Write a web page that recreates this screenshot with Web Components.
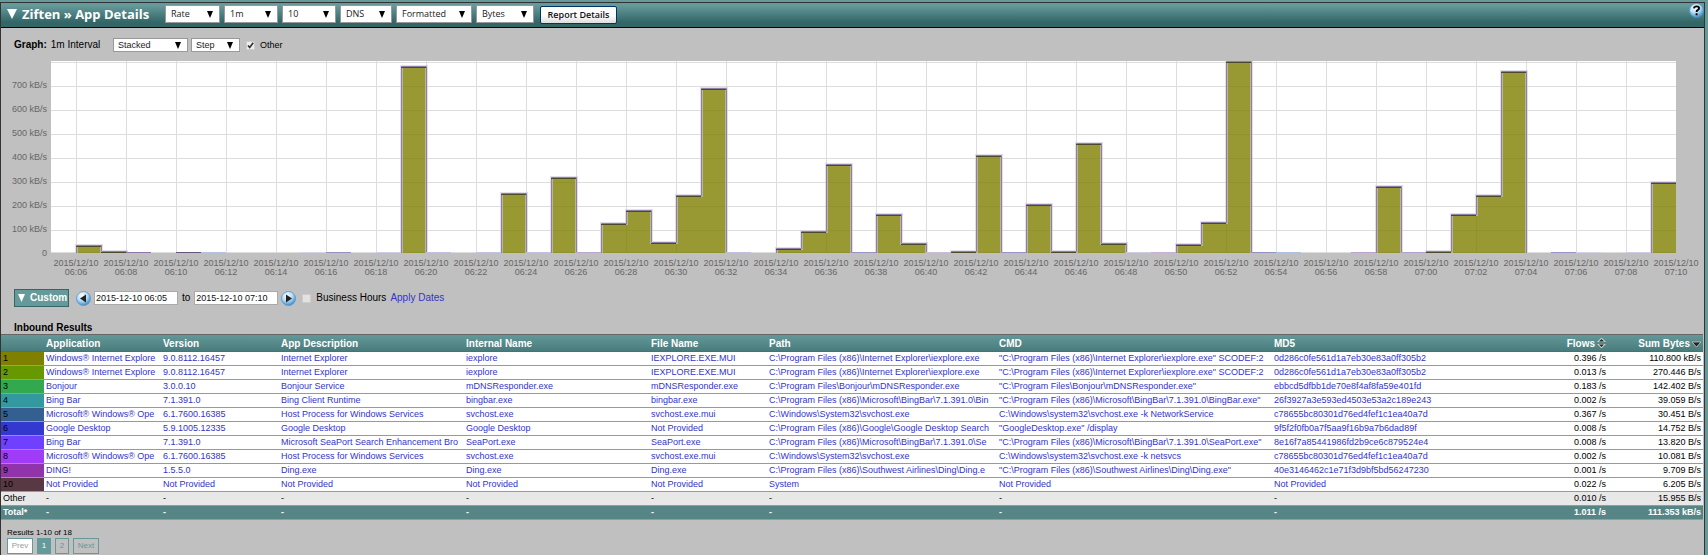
<!DOCTYPE html>
<html lang="en">
<head>
<meta charset="utf-8">
<title>Ziften » App Details</title>
<style>
html { min-height: 100%; background: #699; }
body { margin: 0; padding: 2px 3px 0 0; font: 10px/12px "Liberation Sans", Arial, sans-serif; color: #000; }
</style>
</head>
<body>
<report-page></report-page>
<script>
const define = (name, html, setup) => {
  const template = document.createElement('template');
  template.innerHTML = html;
  customElements.define(name, class extends HTMLElement {
    connectedCallback() {
      if (this.shadowRoot) return;
      this.attachShadow({ mode: 'open' }).append(template.content.cloneNode(true));
      if (setup) setup(this, this.shadowRoot);
    }
  });
};

define('drop-down', `
<style>
:host { display: block; flex: none; }
select {
  display: block; box-sizing: border-box; width: 100%; height: var(--height, 18px); margin: 0; padding: 0 0 0 var(--indent, 5px);
  appearance: none; border: 1px solid #999; border-radius: 0; outline: 0; color: #222;
  font: 9px/12px "Open Sans", sans-serif; font-family: var(--face, "Open Sans", sans-serif);
  background: #fff url("data:image/svg+xml,%3Csvg xmlns='http://www.w3.org/2000/svg' width='6' height='7'%3E%3Cpath d='M0 0h6L3 7z'/%3E%3C/svg%3E") no-repeat right 6px center;
}
</style>
<select></select>`, (host, root) => {
  const select = root.querySelector('select');
  select.setAttribute('aria-label', host.getAttribute('label'));
  select.add(new Option(host.getAttribute('value')));
});

define('check-box', `
<style>
:host { display: block; }
label { display: flex; align-items: center; gap: 5px; }
input { box-sizing: border-box; appearance: none; width: 9px; height: 9px; margin: 0; border: 1px solid #ccc; border-radius: 1px; background: #e2e2e2; }
input:checked { background: url("data:image/svg+xml,%3Csvg xmlns='http://www.w3.org/2000/svg' width='7' height='7'%3E%3Cpath d='M1 3.5 2.7 5.5 6.2 .8' fill='none' stroke='%23333' stroke-width='1.7'/%3E%3C/svg%3E") center no-repeat #eee; }
</style>
<label><input type="checkbox"><slot></slot></label>`, (host, root) => {
  root.querySelector('input').checked = host.hasAttribute('checked');
});

define('round-icon', `
<style>
:host { display: block; flex: none; width: 15px; height: 15px; }
button { display: block; width: 15px; height: 15px; padding: 0; border: 0; background: none; }
svg { display: block; }
</style>
<button type="button"><svg width="15" height="15" viewBox="0 0 15 15">
<defs><radialGradient id="g" cx=".4" cy=".3" r=".75"><stop offset="0" stop-color="#fff"/><stop offset=".5" stop-color="#b5dcf4"/><stop offset="1" stop-color="#2b82cc"/></radialGradient></defs>
<circle cx="7.5" cy="7.5" r="7" fill="url(#g)" stroke="#5496cc" stroke-width=".8"/><path id="glyph"/></svg></button>`, (host, root) => {
  const kind = host.getAttribute('kind');
  const glyph = root.querySelector('#glyph');
  const shapes = { back: 'M10 3.5v8L4 7.5z', next: 'M5 3.5v8L11 7.5z', help: 'M5 5.4Q5.2 3.4 7.6 3.4T10.1 5.2Q10.1 6.3 8.6 7.1 7.6 7.6 7.6 9M7.6 10.2v2' };
  glyph.setAttribute('d', shapes[kind]);
  if (kind === 'help') {
    glyph.setAttribute('fill', 'none');
    glyph.setAttribute('stroke', '#000');
    glyph.setAttribute('stroke-width', '1.9');
  } else glyph.setAttribute('fill', '#222');
  root.querySelector('button').setAttribute('aria-label', kind);
});

define('title-bar', `
<style>
:host { display: flex; align-items: center; gap: 4px; height: 22px; padding: 0 0 2px 6px; border-bottom: 1px solid #000;
  background: linear-gradient(#699 10%, #366 80%); }
h1 { display: flex; align-items: center; gap: 5px; margin: 0; width: 154px; color: #fff; font: bold 13px/20px "Open Sans", sans-serif; white-space: nowrap; }
h1 svg { flex: none; }
button { width: 77px; height: 18px; margin: 2px 0 0 2px; padding: 0; border: 1px solid #036; border-radius: 2px; color: #111;
  background: linear-gradient(#fff 50%, #ddd); font: 600 9px/14px "Open Sans", sans-serif; white-space: nowrap; }
round-icon { margin-left: auto; align-self: flex-start; }
</style>
<h1><svg width="10" height="10" viewBox="0 0 10 10"><path d="M0 0h10L5 10z" fill="#fff"/></svg>Ziften » App Details</h1>
<drop-down style="width:55px" label="Type" value="Rate"></drop-down>
<drop-down style="width:54px" label="Interval" value="1m"></drop-down>
<drop-down style="width:54px" label="Rows" value="10"></drop-down>
<drop-down style="width:52px" label="Names" value="DNS"></drop-down>
<drop-down style="width:76px" label="Format" value="Formatted"></drop-down>
<drop-down style="width:58px" label="Unit" value="Bytes"></drop-down>
<button type="button">Report Details</button>
<round-icon kind="help"></round-icon>`);

define('graph-options', `
<style>
:host { display: flex; align-items: center; gap: 3px; height: 14px; padding: 10px 0 9px 13px; --height: 14px; --indent: 4px; --face: "Liberation Sans"; }
p { display: flex; gap: 4px; margin: 0; width: 96px; }
check-box { margin-left: 3px; font-size: 9px; }
</style>
<p><b>Graph:</b><span>1m Interval</span></p>
<drop-down style="width:75px" label="Graph style" value="Stacked"></drop-down>
<drop-down style="width:49px" label="Line style" value="Step"></drop-down>
<check-box checked>Other</check-box>`);

define('rate-chart', `
<style>
:host { display: grid; grid-template-columns: 50px 1fr; padding-right: 28px; color: #666; font-size: 9px; }
.scale { margin-top: 12px; padding-right: 4px; text-align: right; line-height: 24px; height: 180px; white-space: nowrap; }
svg { display: block; width: 100%; height: 192px; background: #fff; }
path { vector-effect: non-scaling-stroke; fill: none; }
.times { grid-column: 2; display: grid; grid-auto-flow: column; grid-auto-columns: 1fr; width: calc(100% * 66 / 65); padding-top: 6px; line-height: 9px; text-align: center; }
.times span { min-width: 0; display: flex; flex-direction: column; align-items: center; white-space: nowrap; }
</style>
<div class="scale"></div>
<svg viewBox="0 0 1625 192" preserveAspectRatio="none" role="img" aria-label="Bytes per second"></svg>
<div class="times"></div>`, (host, root) => {
  const tops = { 1: 184, 2: 190, 14: 5, 18: 132, 20: 116, 22: 162, 23: 149, 24: 181, 25: 134, 26: 27, 29: 187, 30: 170, 31: 103,
    33: 153, 34: 182, 36: 190, 37: 94, 39: 143, 40: 190, 41: 82, 42: 182, 45: 183, 46: 161, 47: 0, 53: 125, 55: 190, 56: 153, 57: 134, 58: 10, 64: 121 };
  const traces = { 3: '#8f76ad', 5: '#66557a', 6: '#b6c1e0', 10: '#d8d0e6', 11: '#9a8fc0', 13: '#cfcbe6', 15: '#c4bfe0', 17: '#c4c4e0', 19: '#c4bfe0', 21: '#bca8cc',
    27: '#c4bfe0', 32: '#9a92c4', 35: '#c8bcd8', 38: '#9a92c4', 43: '#d0cae4', 44: '#c8b0d4', 48: '#9690c0', 49: '#acc0e0', 52: '#b8a4cc', 54: '#b0a0cc', 60: '#9a92c4', 61: '#d8d0e6', 63: '#cfcbe6' };
  const draw = (d, css) => `<path d="${d}" style="${css}"/>`;
  let grid = 'M0 191.5H1625', fill = '', shade = '', outline = '', lines = '';
  for (let y = 1; y < 190; y += 24) grid += `M0 ${y + .5}H1625`;
  for (let x = 25; x < 1625; x += 50) grid += `M${x + .5} 0V192`;
  for (let m = 0; m < 65; m++) {
    const x = m * 25, y = tops[m];
    if (y === undefined) {
      if (tops[m - 1] !== undefined) outline += 'V192';
      if (traces[m]) lines += draw(`M${x} 191.5h25`, `stroke:${traces[m]}`);
    } else {
      fill += `M${x} ${y + 1}h25V192h-25z`;
      shade += `M${x} ${y + 1.5}h25`;
      outline += tops[m - 1] === undefined ? `M${x + .5} 192V${y + .5}H${x + 25.5}` : `V${y + .5}h25`;
    }
  }
  root.querySelector('svg').innerHTML = draw(grid, 'stroke:#ddd') + draw(fill, 'fill:#808000;fill-opacity:.8') +
    draw(outline, 'stroke:#cfc8dc;stroke-width:3;stroke-opacity:.6') + draw(outline, 'stroke:#8d7fa5') + draw(shade, 'stroke:#4c4a2c') + lines;
  root.querySelector('.scale').innerHTML = [700, 600, 500, 400, 300, 200, 100].map(v => `<div>${v} kB/s</div>`).join('') + '<div>0</div>';
  let times = '';
  for (let m = 366; m <= 430; m += 2)
    times += `<span><span>2015/12/10</span><span>0${Math.floor(m / 60)}:${String(m % 60).padStart(2, '0')}</span></span>`;
  root.querySelector('.times').innerHTML = times;
});

define('date-range', `
<style>
:host { display: flex; align-items: center; height: 18px; padding: 12px 0 15px 13px; }
button { display: flex; align-items: center; gap: 5px; box-sizing: border-box; width: 55px; height: 18px; margin-right: 7px; padding: 0 0 0 3px; border: 1px solid #366; background: #699; color: #fff; font: bold 10px/12px "Liberation Sans", sans-serif; }
input { box-sizing: border-box; width: 84px; height: 14px; margin: 0 3px; padding: 0 1px; border: 1px solid #aaa; border-radius: 0; background: #fff; color: #111; font: 9px/12px "Liberation Sans", sans-serif; }
span { margin: 0 1px; }
check-box { margin: 0 4px 0 6px; }
a { color: #33c; text-decoration: none; }
</style>
<button type="button"><svg width="7" height="8" viewBox="0 0 7 8"><path d="M0 0h7L3.5 8z" fill="#fff"/></svg>Custom</button>
<round-icon kind="back"></round-icon>
<input type="text" aria-label="From" value="2015-12-10 06:05"><span>to</span>
<input type="text" aria-label="To" value="2015-12-10 07:10">
<round-icon kind="next"></round-icon>
<check-box>Business Hours</check-box>
<a href="#">Apply Dates</a>`);

define('results-table', `
<style>
:host { display: block; padding-right: 1px; }
h2 { margin: 0 0 0 13px; font: bold 10px/12px "Liberation Sans", sans-serif; }
table { width: 100%; table-layout: fixed; border-collapse: separate; border-spacing: 0; background: #fff; font-size: 9px; line-height: 13px; }
td, th { height: 13px; padding: 0 2px; text-align: left; border-bottom: 1px solid #999; }
td > *, td { overflow: hidden; white-space: nowrap; }
td > a { display: block; height: 13px; }
th { height: 16px; border-top: 1px solid #666; border-bottom-color: #666; color: #fff; font-size: 10px; white-space: nowrap; }
thead tr { background: linear-gradient(#699, #477a7a); }
a { color: #33c; text-decoration: none; }
.n { text-align: right; }
th svg { vertical-align: -1px; margin-left: 2px; }
.other td { background: #e8e8e8; }
.total td { background: #558585; color: #fff; font-weight: bold; }
</style>
<h2>Inbound Results</h2>
<table>
<colgroup></colgroup>
<thead><tr><th></th><th>Application</th><th>Version</th><th>App Description</th><th>Internal Name</th><th>File Name</th><th>Path</th><th>CMD</th><th>MD5</th>
<th class="n">Flows<svg width="9" height="10" viewBox="0 0 9 10"><path d="M0 4 4.5-.5 9 4zM0 6 4.5 10.5 9 6z" fill="#ccc"/><path d="M2 3.5 4.5 1 7 3.5zM2 6.5 4.5 9 7 6.5z" fill="#222"/></svg></th>
<th class="n">Sum Bytes<svg width="9" height="8" viewBox="0 0 9 8"><path d="M0 2h9L4.5 7z" fill="#222" stroke="#ccc" stroke-width=".8"/></svg></th></tr></thead>
<tbody></tbody>
</table>`, (host, root) => {
  const widths = [43, 117, 118, 185, 185, 118, 230, 275, 0, 88, 95];
  const colors = ['#808000', '#690', '#33a94f', '#33999f', '#336090', '#3338cf', '#6f40ff', '#a03cf8', '#9133aa', '#583842'];
  const pf = 'C:\\Program Files (x86)\\', np = 'Not Provided';
  const host32 = 'C:\\Windows\\System32\\svchost.exe', ie = 'Windows® Internet Explore';
  const rows = [
    [ie, '9.0.8112.16457', 'Internet Explorer', 'iexplore', 'IEXPLORE.EXE.MUI', pf + 'Internet Explorer\\iexplore.exe', `"${pf}Internet Explorer\\iexplore.exe" SCODEF:2`, '0d286c0fe561d1a7eb30e83a0ff305b2', '0.396 /s', '110.800 kB/s'],
    [ie, '9.0.8112.16457', 'Internet Explorer', 'iexplore', 'IEXPLORE.EXE.MUI', pf + 'Internet Explorer\\iexplore.exe', `"${pf}Internet Explorer\\iexplore.exe" SCODEF:2`, '0d286c0fe561d1a7eb30e83a0ff305b2', '0.013 /s', '270.446 B/s'],
    ['Bonjour', '3.0.0.10', 'Bonjour Service', 'mDNSResponder.exe', 'mDNSResponder.exe', 'C:\\Program Files\\Bonjour\\mDNSResponder.exe', '"C:\\Program Files\\Bonjour\\mDNSResponder.exe"', 'ebbcd5dfbb1de70e8f4af8fa59e401fd', '0.183 /s', '142.402 B/s'],
    ['Bing Bar', '7.1.391.0', 'Bing Client Runtime', 'bingbar.exe', 'bingbar.exe', pf + 'Microsoft\\BingBar\\7.1.391.0\\Bin', `"${pf}Microsoft\\BingBar\\7.1.391.0\\BingBar.exe"`, '26f3927a3e593ed4503e53a2c189e243', '0.002 /s', '39.059 B/s'],
    ['Microsoft® Windows® Ope', '6.1.7600.16385', 'Host Process for Windows Services', 'svchost.exe', 'svchost.exe.mui', host32, 'C:\\Windows\\system32\\svchost.exe -k NetworkService', 'c78655bc80301d76ed4fef1c1ea40a7d', '0.367 /s', '30.451 B/s'],
    ['Google Desktop', '5.9.1005.12335', 'Google Desktop', 'Google Desktop', np, pf + 'Google\\Google Desktop Search', '"GoogleDesktop.exe" /display', '9f5f2f0fb0a7f5aa9f16b9a7b6dad89f', '0.008 /s', '14.752 B/s'],
    ['Bing Bar', '7.1.391.0', 'Microsoft SeaPort Search Enhancement Bro', 'SeaPort.exe', 'SeaPort.exe', pf + 'Microsoft\\BingBar\\7.1.391.0\\Se', `"${pf}Microsoft\\BingBar\\7.1.391.0\\SeaPort.exe"`, '8e16f7a85441986fd2b9ce6c879524e4', '0.008 /s', '13.820 B/s'],
    ['Microsoft® Windows® Ope', '6.1.7600.16385', 'Host Process for Windows Services', 'svchost.exe', 'svchost.exe.mui', host32, 'C:\\Windows\\system32\\svchost.exe -k netsvcs', 'c78655bc80301d76ed4fef1c1ea40a7d', '0.002 /s', '10.081 B/s'],
    ['DING!', '1.5.5.0', 'Ding.exe', 'Ding.exe', 'Ding.exe', pf + 'Southwest Airlines\\Ding\\Ding.e', `"${pf}Southwest Airlines\\Ding\\Ding.exe"`, '40e3146462c1e71f3d9bf5bd56247230', '0.001 /s', '9.709 B/s'],
    [np, np, np, np, np, 'System', np, np, '0.022 /s', '6.205 B/s']
  ];
  const cells = (row, linked) => row.map((text, i) => i > 7 ? `<td class="n">${text}</td>` : linked ? `<td><a href="#">${text}</a></td>` : `<td>${text}</td>`).join('');
  const dashes = Array(8).fill('-');
  root.querySelector('colgroup').innerHTML = widths.map(w => w ? `<col style="width:${w}px">` : '<col>').join('');
  root.querySelector('tbody').innerHTML =
    rows.map((row, i) => `<tr><td style="background:${colors[i]}">${i + 1}</td>${cells(row, true)}</tr>`).join('') +
    `<tr class="other"><td>Other</td>${cells([...dashes, '0.010 /s', '15.955 B/s'])}</tr>` +
    `<tr class="total"><td>Total*</td>${cells([...dashes, '1.011 /s', '111.353 kB/s'])}</tr>`;
});

define('result-pager', `
<style>
:host { display: block; padding: 8px 0 1px 6px; font-size: 8px; line-height: 10px; }
nav { display: flex; gap: 4px; }
button { box-sizing: border-box; width: 26px; height: 16px; padding: 0; border: 1px solid #699; background: none; color: #699; font: 8px/12px "Liberation Sans", sans-serif; }
.off { background: #fff; color: #999; }
.page { width: 14px; }
.on { background: #699; color: #fff; }
</style>
Results 1-10 of 18
<nav aria-label="Pages"><button type="button" class="off">Prev</button><button type="button" class="page on">1</button><button type="button" class="page">2</button><button type="button">Next</button></nav>`);

define('report-page', `
<style>:host { display: block; border: 1px solid #333; border-bottom: 0; background: #c0c0c0; }</style>
<title-bar></title-bar>
<graph-options></graph-options>
<rate-chart></rate-chart>
<date-range></date-range>
<results-table></results-table>
<result-pager></result-pager>`);
</script>
</body>
</html>
